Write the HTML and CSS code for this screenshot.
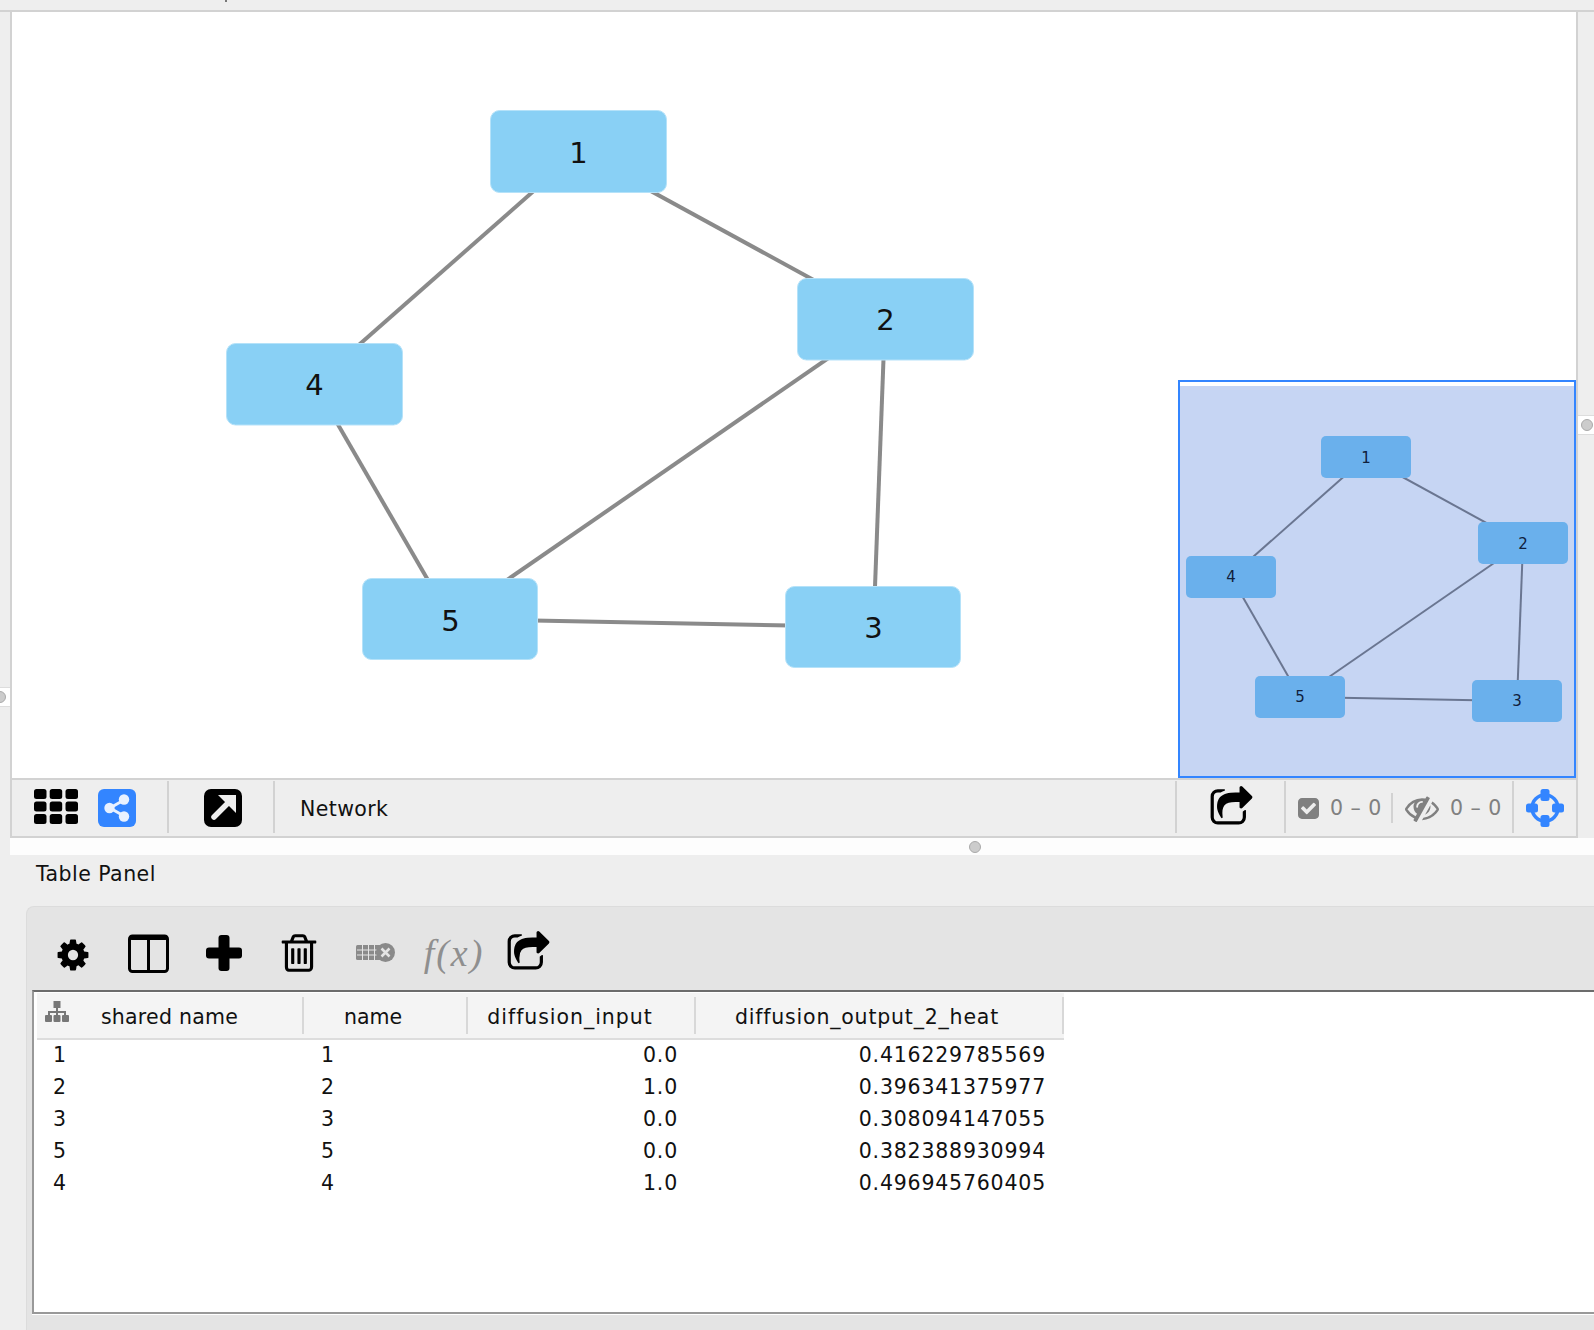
FILE: index.html
```html
<!DOCTYPE html>
<html lang="en">
<head>
    <meta charset="UTF-8">
    <title>Network and Table Panel</title>
    <link rel="stylesheet" href="styles.css">
</head>
<body>
    <div class="page">
        <div class="top-gap"><span class="top-tick"></span></div>

        <div class="network-view">
            <div class="canvas">
                <svg class="graph" width="1564" height="766" viewBox="12 12 1564 766">
                    <g class="edges">
                        <line x1="578.500" y1="151.500" x2="885" y2="319"></line>
                        <line x1="578.500" y1="151.500" x2="314.500" y2="384"></line>
                        <line x1="885" y1="319" x2="873.500" y2="627"></line>
                        <line x1="885" y1="319" x2="450.500" y2="619"></line>
                        <line x1="873.500" y1="627" x2="450.500" y2="619"></line>
                        <line x1="314.500" y1="384" x2="450.500" y2="619"></line>
                    </g>
                    <g class="nodes">
                        <rect x="490.500" y="110.500" width="176" height="82" rx="9"></rect>
                        <rect x="797.500" y="278.500" width="176" height="81.500" rx="9"></rect>
                        <rect x="226.500" y="343.500" width="176" height="81.500" rx="9"></rect>
                        <rect x="362.500" y="578.500" width="175" height="81" rx="9"></rect>
                        <rect x="785.500" y="586.500" width="175" height="81" rx="9"></rect>
                    </g>
                    <g class="labels">
                        <text x="578.500" y="163">1</text>
                        <text x="885.500" y="330">2</text>
                        <text x="314.500" y="395">4</text>
                        <text x="450.500" y="631">5</text>
                        <text x="873.500" y="638">3</text>
                    </g>
                </svg>

                <div class="birdseye">
                    <svg width="394" height="390" viewBox="1180 386 394 390">
                        <g class="mini-edges">
                            <line x1="1366" y1="457" x2="1523" y2="543"></line>
                            <line x1="1366" y1="457" x2="1231" y2="576.500"></line>
                            <line x1="1523" y1="543" x2="1517" y2="701"></line>
                            <line x1="1523" y1="543" x2="1300" y2="697"></line>
                            <line x1="1517" y1="701" x2="1300" y2="697"></line>
                            <line x1="1231" y1="576.500" x2="1300" y2="697"></line>
                        </g>
                        <g class="mini-nodes">
                            <rect x="1321" y="436" width="90" height="42" rx="5"></rect>
                            <rect x="1478" y="522" width="90" height="42" rx="5"></rect>
                            <rect x="1186" y="556" width="90" height="42" rx="5"></rect>
                            <rect x="1255" y="676" width="90" height="42" rx="5"></rect>
                            <rect x="1472" y="680" width="90" height="42" rx="5"></rect>
                        </g>
                        <g class="mini-labels">
                            <text x="1366" y="463">1</text>
                            <text x="1523" y="549">2</text>
                            <text x="1231" y="582">4</text>
                            <text x="1300" y="702">5</text>
                            <text x="1517" y="706">3</text>
                        </g>
                    </svg>
                </div>
            </div>

            <div class="net-toolbar">
                <div class="tb-sec tb-views">
                    <svg class="grid-icon" width="44" height="35" viewBox="0 0 44 35">
                        <rect x="0" y="0" width="12.500" height="10" rx="2.500"></rect>
                        <rect x="15.700" y="0" width="12.500" height="10" rx="2.500"></rect>
                        <rect x="31.500" y="0" width="12.500" height="10" rx="2.500"></rect>
                        <rect x="0" y="12.500" width="12.500" height="10" rx="2.500"></rect>
                        <rect x="15.700" y="12.500" width="12.500" height="10" rx="2.500"></rect>
                        <rect x="31.500" y="12.500" width="12.500" height="10" rx="2.500"></rect>
                        <rect x="0" y="25" width="12.500" height="10" rx="2.500"></rect>
                        <rect x="15.700" y="25" width="12.500" height="10" rx="2.500"></rect>
                        <rect x="31.500" y="25" width="12.500" height="10" rx="2.500"></rect>
                    </svg>
                    <svg width="38" height="38" viewBox="0 0 38 38">
                        <rect width="38" height="38" rx="6" fill="#3385ff"></rect>
                        <path d="M26 11 L12 19 L26 27" fill="none" stroke="#e8f1ff" stroke-width="3"></path>
                        <circle cx="26" cy="10.500" r="5.200" fill="#e8f1ff"></circle>
                        <circle cx="11.500" cy="19" r="5.200" fill="#e8f1ff"></circle>
                        <circle cx="26" cy="27.500" r="5.200" fill="#e8f1ff"></circle>
                    </svg>
                </div>
                <div class="tb-sec tb-open">
                    <svg width="38" height="38" viewBox="0 0 38 38">
                        <rect width="38" height="38" rx="7" fill="#000"></rect>
                        <path d="M10 28 L25 13" stroke="#eee" stroke-width="5.500" stroke-linecap="round"></path>
                        <path d="M14 6 H32 V24 Z" fill="#eee"></path>
                    </svg>
                </div>
                <div class="tb-title">Network</div>
                <div class="tb-sec tb-export">
                    <svg width="45" height="45" viewBox="0 0 1792 1792">
                        <path d="M1472 989v259q0 119-84.500 203.500t-203.500 84.500h-832q-119 0-203.500-84.500t-84.500-203.500v-832q0-119 84.500-203.500t203.500-84.500h255q13 0 22.500 9.500t9.500 22.500q0 27-26 32-77 26-133 60-10 4-16 4h-112q-66 0-113 47t-47 113v832q0 66 47 113t113 47h832q66 0 113-47t47-113v-214q0-19 18-29 28-13 54-37 16-16 35-8 21 9 21 29zm237-496l-384 384q-18 19-45 19-12 0-25-5-39-17-39-59v-192h-160q-323 0-438 131-119 137-74 473 3 23-20 34-8 2-12 2-16 0-26-13-10-14-21-31t-39.500-68.500-49.500-99.500-38.500-114-17.500-122q0-49 3.500-91t14-90 28-88 47-81.500 68.500-74 94.500-61.500 124.500-48.500 159.500-30.500 196.500-11h160v-192q0-42 39-59 13-5 25-5 26 0 45 19l384 384q19 19 19 45t-19 45z"></path>
                    </svg>
                </div>
                <div class="tb-sec tb-counts">
                    <svg class="count-icon" width="21" height="21" viewBox="128 128 1536 1536">
                        <path d="M813 1299l614-614q19-19 19-45t-19-45l-102-102q-19-19-45-19t-45 19l-467 467-211-211q-19-19-45-19t-45 19l-102 102q-19 19-19 45t19 45l358 358q19 19 45 19t45-19zm851-883v960q0 119-84.500 203.500t-203.500 84.500h-960q-119 0-203.500-84.500t-84.500-203.500v-960q0-119 84.500-203.500t203.500-84.500h960q119 0 203.500 84.500t84.500 203.500z"></path>
                    </svg>
                    <span class="count">0 – 0</span>
                    <span class="short-sep"></span>
                    <svg class="count-icon" width="34" height="34" viewBox="0 0 1792 1792">
                        <path d="M555 1335l78-141q-87-63-136-159t-49-203q0-121 61-225-229 117-381 353 167 258 427 375zm389-759q0-20-14-34t-34-14q-125 0-214.500 89.500t-89.500 214.500q0 20 14 34t34 14 34-14 14-34q0-86 61-147t147-61q20 0 34-14t14-34zm363-191q0 7-1 9-106 189-316 567t-315 566l-49 89q-10 16-28 16-12 0-134-70-16-10-16-28 0-12 44-87-143-65-263.500-173t-208.500-245q-20-31-20-69t20-69q153-235 380-371t496-136q89 0 180 17l54-97q10-16 28-16 5 0 18 6t31 15.500 33 18.500 31.500 18.500 19.500 11.500q16 10 16 27zm37 447q0 139-79 253.500t-209 164.500l280-502q8 45 8 84zm448 128q0 35-20 69-39 64-109 145-150 172-347.500 267t-419.500 95l74-132q212-18 392.500-137t301.500-307q-115-179-282-294l63-112q95 64 182.500 153t144.500 184q20 34 20 69z"></path>
                    </svg>
                    <span class="count">0 – 0</span>
                </div>
                <div class="tb-sec tb-fit">
                    <svg width="38" height="38" viewBox="0 0 38 38" fill="#3385ff">
                        <circle cx="19" cy="19" r="13" fill="none" stroke="#3385ff" stroke-width="3.500"></circle>
                        <rect x="14.500" y="0" width="9" height="12" rx="2.500"></rect>
                        <rect x="14.500" y="26" width="9" height="12" rx="2.500"></rect>
                        <rect x="0" y="14.500" width="12" height="9" rx="2.500"></rect>
                        <rect x="26" y="14.500" width="12" height="9" rx="2.500"></rect>
                    </svg>
                </div>
            </div>
        </div>

        <div class="split-strip"><span class="handle"></span></div>

        <div class="panel-title">Table Panel</div>

        <div class="table-panel">
            <div class="table-toolbar">
                <span class="tool tool-gear">
                    <svg width="36" height="36" viewBox="0 0 1792 1792">
                        <path d="M1152 896q0-106-75-181t-181-75-181 75-75 181 75 181 181 75 181-75 75-181zm512-109v222q0 12-8 23t-20 13l-185 28q-19 54-39 91 35 50 107 138 10 12 10 25t-9 23q-27 37-99 108t-94 71q-12 0-26-9l-138-108q-44 23-91 38-16 136-29 186-7 28-36 28h-222q-14 0-24.500-8.500t-11.500-21.500l-28-184q-49-16-90-37l-141 107q-10 9-25 9-14 0-25-11-126-114-165-168-7-10-7-23 0-12 8-23 15-21 51-66.500t54-70.500q-27-50-41-99l-183-27q-13-2-21-12.500t-8-23.500v-222q0-12 8-23t19-13l186-28q14-46 39-92-40-57-107-138-10-12-10-24 0-10 9-23 26-36 98.500-107.500t94.500-71.500q13 0 26 10l138 107q44-23 91-38 16-136 29-186 7-28 36-28h222q14 0 24.500 8.500t11.500 21.500l28 184q49 16 90 37l142-107q9-9 24-9 13 0 25 10 129 119 165 170 7 8 7 22 0 12-8 23-15 21-51 66.500t-54 70.500q26 50 41 98l183 28q13 2 21 12.500t8 23.500z"></path>
                    </svg>
                </span>
                <span class="tool tool-columns">
                    <svg width="41" height="39" viewBox="0 0 41 39">
                        <rect x="1.500" y="2" width="38" height="35.500" rx="3" fill="none" stroke="#000" stroke-width="3"></rect>
                        <rect x="1.500" y="1" width="38" height="5" rx="2"></rect>
                        <rect x="19" y="2" width="3" height="35"></rect>
                    </svg>
                </span>
                <span class="tool">
                    <svg width="36" height="36" viewBox="0 0 36 36">
                        <rect x="12.500" y="0" width="11" height="36" rx="3"></rect>
                        <rect x="0" y="12.500" width="36" height="11" rx="3"></rect>
                    </svg>
                </span>
                <span class="tool">
                    <svg width="44" height="44" viewBox="0 0 1792 1792">
                        <path d="M704 736v576q0 14-9 23t-23 9h-64q-14 0-23-9t-9-23v-576q0-14 9-23t23-9h64q14 0 23 9t9 23zm256 0v576q0 14-9 23t-23 9h-64q-14 0-23-9t-9-23v-576q0-14 9-23t23-9h64q14 0 23 9t9 23zm256 0v576q0 14-9 23t-23 9h-64q-14 0-23-9t-9-23v-576q0-14 9-23t23-9h64q14 0 23 9t9 23zm128 724v-948h-896v948q0 22 7 40.500t14.500 27 10.500 8.500h832q3 0 10.500-8.500t14.500-27 7-40.500zm-672-1076h448l-48-117q-7-9-17-11h-317q-10 2-17 11zm928 32v64q0 14-9 23t-23 9h-96v948q0 83-47 143.500t-113 60.500h-832q-66 0-113-58.500t-47-141.500v-952h-96q-14 0-23-9t-9-23v-64q0-14 9-23t23-9h309l70-167q15-37 54-63t79-26h320q40 0 79 26t54 63l70 167h309q14 0 23 9t9 23z"></path>
                    </svg>
                </span>
                <span class="tool tool-grid">
                    <svg width="39" height="21" viewBox="0 0 39 21">
                        <rect x="0" y="3" width="25" height="15" rx="1.500" fill="#8a8a8a"></rect>
                        <path d="M1 8H24M1 13H24M6.500 3V18M12.500 3V18M18.500 3V18" stroke="#e4e4e4" stroke-width="1"></path>
                        <circle cx="29.500" cy="10.500" r="9.500" fill="#8a8a8a"></circle>
                        <path d="M25.500 6.500L33.500 14.500M33.500 6.500L25.500 14.500" stroke="#e4e4e4" stroke-width="2.500"></path>
                    </svg>
                </span>
                <span class="tool tool-fx">f(x)</span>
                <span class="tool tool-export">
                    <svg width="45" height="45" viewBox="0 0 1792 1792">
                        <path d="M1472 989v259q0 119-84.500 203.500t-203.500 84.500h-832q-119 0-203.500-84.500t-84.500-203.500v-832q0-119 84.500-203.500t203.500-84.500h255q13 0 22.500 9.500t9.500 22.500q0 27-26 32-77 26-133 60-10 4-16 4h-112q-66 0-113 47t-47 113v832q0 66 47 113t113 47h832q66 0 113-47t47-113v-214q0-19 18-29 28-13 54-37 16-16 35-8 21 9 21 29zm237-496l-384 384q-18 19-45 19-12 0-25-5-39-17-39-59v-192h-160q-323 0-438 131-119 137-74 473 3 23-20 34-8 2-12 2-16 0-26-13-10-14-21-31t-39.500-68.500-49.500-99.500-38.500-114-17.500-122q0-49 3.500-91t14-90 28-88 47-81.500 68.500-74 94.500-61.500 124.500-48.500 159.500-30.500 196.500-11h160v-192q0-42 39-59 13-5 25-5 26 0 45 19l384 384q19 19 19 45t-19 45z"></path>
                    </svg>
                </span>
            </div>

            <div class="table-frame">
                <table class="data-table">
                    <thead>
                        <tr>
                            <th class="col-shared">
                                <svg class="tree-icon" width="24" height="22" viewBox="0 0 24 22" fill="#777">
                                    <rect x="8.500" y="0" width="7" height="7"></rect>
                                    <path d="M11 7h2v3h8v4h-2v-2h-6v2h-2v-2H5v2H3v-4h8z"></path>
                                    <rect x="0" y="14" width="7" height="7" rx="1"></rect>
                                    <rect x="8.500" y="14" width="7" height="7" rx="1"></rect>
                                    <rect x="17" y="14" width="7" height="7" rx="1"></rect>
                                </svg>
                                shared name
                            </th>
                            <th class="col-name">name</th>
                            <th class="col-input">diffusion_input</th>
                            <th class="col-output">diffusion_output_2_heat</th>
                        </tr>
                    </thead>
                    <tbody>
                        <tr><td>1</td><td>1</td><td class="num">0.0</td><td class="num">0.416229785569</td></tr>
                        <tr><td>2</td><td>2</td><td class="num">1.0</td><td class="num">0.396341375977</td></tr>
                        <tr><td>3</td><td>3</td><td class="num">0.0</td><td class="num">0.308094147055</td></tr>
                        <tr><td>5</td><td>5</td><td class="num">0.0</td><td class="num">0.382388930994</td></tr>
                        <tr><td>4</td><td>4</td><td class="num">1.0</td><td class="num">0.496945760405</td></tr>
                    </tbody>
                </table>
            </div>
        </div>

        <span class="side-strip strip-right"><span class="side-handle"></span></span>
        <span class="side-strip strip-left"><span class="side-handle"></span></span>
    </div>
</body>
</html>
```

FILE: styles.css
```css
html, body {
    margin: 0;
    padding: 0;
}

body {
    font-family: 'DejaVu Sans', sans-serif;
    font-size: 20.5px;
    color: #111;
    background-color: #eee;
}

.page {
    position: relative;
    width: 1594px;
    height: 1330px;
    overflow: hidden;
    background-color: #eee;
}

.top-gap {
    position: relative;
    height: 10px;
    border-bottom: 2px solid #d2d2d2;
}

.top-tick {
    position: absolute;
    left: 225px;
    top: 0;
    width: 2px;
    height: 2px;
    background-color: #777;
}

/* network view */
.network-view {
    width: 1564px;
    margin-left: 10px;
    border: 2px solid #d2d2d2;
    border-top: 0;
}

.canvas {
    position: relative;
    height: 766px;
    background-color: #fff;
    border-bottom: 2px solid #d2d2d2;
}

.graph {
    display: block;
}

.edges line {
    stroke: #8a8a8a;
    stroke-width: 4;
}

.nodes rect {
    fill: #89d0f5;
    stroke: #b5e2f9;
    stroke-width: 1;
}

.labels text {
    font-size: 29px;
    text-anchor: middle;
    fill: #111;
}

.birdseye {
    position: absolute;
    left: 1166px;
    top: 368px;
    width: 394px;
    padding-top: 4px;
    background-color: #fff;
    border: 2px solid #3385ff;
}

.birdseye svg {
    display: block;
    background-color: #c6d5f3;
}

.mini-edges line {
    stroke: #6a7691;
    stroke-width: 2;
}

.mini-nodes rect {
    fill: #6ab0ec;
}

.mini-labels text {
    font-size: 15px;
    text-anchor: middle;
    fill: #10203c;
}

.net-toolbar {
    display: flex;
    height: 56px;
}

.tb-sec {
    display: flex;
    align-items: center;
    box-sizing: border-box;
    height: 52px;
    margin-top: 1px;
    padding-top: 2px;
    flex: none;
}

.tb-views {
    width: 157px;
    padding-left: 22px;
    gap: 20px;
    border-right: 2px solid #d2d2d2;
}

.grid-icon {
    margin-top: -3px;
}

.tb-open {
    width: 106px;
    padding-left: 4px;
    justify-content: center;
    border-right: 2px solid #d2d2d2;
}

.tb-title {
    flex: 1;
    padding-left: 25px;
    line-height: 58px;
    letter-spacing: 0.400px;
}

.tb-export {
    width: 111px;
    justify-content: center;
    border-left: 2px solid #d2d2d2;
    border-right: 2px solid #d2d2d2;
    padding-left: 2px;
}

.tb-counts {
    width: 226px;
    padding-left: 12px;
    color: #808080;
}

.count-icon {
    fill: #808080;
    flex: none;
}

.count {
    margin-left: 11px;
    white-space: nowrap;
    letter-spacing: 0.500px;
}

.short-sep {
    width: 2px;
    height: 30px;
    margin: 0 12px 0 9px;
    background-color: #d2d2d2;
}

.tb-fit {
    width: 64px;
    justify-content: center;
    border-left: 2px solid #d2d2d2;
}

/* splitter between network and table */
.split-strip {
    position: relative;
    height: 17px;
    margin-left: 10px;
    background-color: #fdfdfd;
}

.handle {
    position: absolute;
    left: 959px;
    top: 3px;
    width: 10px;
    height: 10px;
    border-radius: 50%;
    background-color: #ccc;
    border: 1px solid #aaa;
}

.side-strip {
    position: absolute;
    box-sizing: border-box;
    height: 20px;
    background-color: #fff;
    border-top: 1px solid #ddd;
    border-bottom: 1px solid #ddd;
}

.strip-right {
    left: 1578px;
    top: 415px;
    width: 16px;
}

.strip-left {
    left: 0;
    top: 687px;
    width: 10px;
}

.side-handle {
    position: absolute;
    top: 3px;
    width: 10px;
    height: 10px;
    border-radius: 50%;
    background-color: #ccc;
    border: 1px solid #aaa;
}

.strip-right .side-handle {
    left: 3px;
}

.strip-left .side-handle {
    left: -6px;
}

/* table panel */
.panel-title {
    height: 51px;
    padding-left: 36px;
    line-height: 39px;
    letter-spacing: 0.450px;
}

.table-panel {
    margin-left: 26px;
    height: 424px;
    border-top: 1px solid #dcdcdc;
    border-left: 1px solid #dcdcdc;
    border-top-left-radius: 8px;
    background-color: #e4e4e4;
}

.table-toolbar {
    display: flex;
    align-items: center;
    box-sizing: border-box;
    height: 83px;
    padding: 8px 0 0 9px;
}

.tool {
    display: flex;
    justify-content: center;
    align-items: center;
    width: 75px;
    flex: none;
}

.tool-gear {
    width: 73px;
    margin: 4px 2px 0 0;
}

.tool-columns {
    margin-top: 2px;
}

.tool-grid {
    width: 71px;
    margin-left: 4px;
}

.tool-fx {
    width: 64px;
    margin-left: 11px;
    font-family: 'Liberation Serif', serif;
    font-style: italic;
    font-size: 38px;
    letter-spacing: 2px;
    color: #8f8f8f;
}

.tool-export {
    width: 67px;
    margin: 2px 0 0 9px;
}

.table-frame {
    box-sizing: border-box;
    height: 324px;
    margin-left: 5px;
    padding: 1px 0 0 3px;
    background-color: #fff;
    border: 2px solid #999;
    border-top-color: #6c6c6c;
    border-right: 0;
    box-shadow: 0 1px 0 #fff;
}

.data-table {
    table-layout: fixed;
    width: 1027px;
    border-collapse: separate;
    border-spacing: 0;
}

th {
    position: relative;
    box-sizing: border-box;
    height: 47px;
    padding: 2px 26px 0 0;
    font-weight: normal;
    text-align: center;
    white-space: nowrap;
    background-color: #f4f4f4;
    border-bottom: 2px solid #ddd;
}

th::after {
    content: "";
    position: absolute;
    right: 0;
    top: 4px;
    bottom: 4px;
    width: 2px;
    background-color: #d8d8d8;
}

.col-shared {
    width: 267px;
    padding-left: 24px;
    letter-spacing: 0.250px;
}

.col-name {
    width: 164px;
}

.col-input {
    width: 228px;
    padding-right: 24px;
    letter-spacing: 0.950px;
}

.col-output {
    width: 368px;
    letter-spacing: 0.800px;
}

.tree-icon {
    position: absolute;
    left: 8px;
    top: 8px;
}

td {
    height: 32px;
    padding: 0 0 3px 16px;
    box-sizing: border-box;
    line-height: 26px;
}

td:nth-child(2) {
    padding-left: 17px;
}

td.num {
    padding: 0 18px 3px 0;
    text-align: right;
    letter-spacing: 0.800px;
}
```
